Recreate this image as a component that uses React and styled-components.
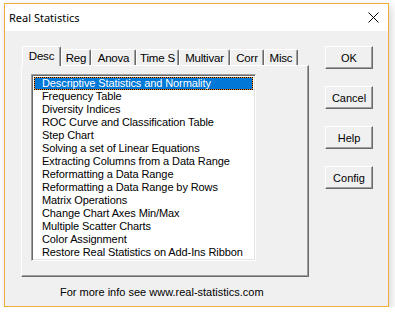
import React from 'react'
import styled, { createGlobalStyle } from 'styled-components'

const Global = createGlobalStyle`
html, body {
  margin: 0;
  padding: 0;
  background: #ffffff;
}
`

const Window = styled.div`
margin: 3px 0 0 4px;
width: 385px;
height: 304px;
box-sizing: border-box;
border: 1px solid #f0ad3e;
background: #f0f0f0;
box-shadow: 2px 3px 9px rgba(0,0,0,0.18);
display: flex;
flex-direction: column;
font-family: "Liberation Sans", Arial, sans-serif;
font-size: 11px;
color: #000;
`

const TitleBar = styled.div`
height: 27px;
background: #fff;
display: flex;
align-items: center;
justify-content: space-between;
padding: 0 9px 0 4px;
`

const Title = styled.div`
font-family: "Noto Sans", "Liberation Sans", sans-serif;
font-size: 11px;
`

const Close = styled.div`
width: 11px;
height: 11px;
display: flex;
`

const Body = styled.div`
flex: 1;
display: flex;
padding: 14px 0 0 16px;
`

const LeftCol = styled.div`
width: 288px;
display: flex;
flex-direction: column;
`

const TabRow = styled.div`
display: flex;
align-items: flex-end;
height: 20px;
padding-left: 1px;
position: relative;
z-index: 1;
`

const Tab = styled.div`
box-sizing: border-box;
width: ${p => p.w}px;
height: ${p => (p.active ? 20 : 16)}px;
border-top: 1px solid #fff;
border-left: 1px solid #fff;
border-right: 1px solid #696969;
box-shadow: inset -1px 0 0 #a0a0a0;
border-radius: 2px 2px 0 0;
background: #f0f0f0;
display: flex;
justify-content: center;
align-items: ${p => (p.active ? 'flex-start' : 'center')};
padding-top: ${p => (p.active ? '3px' : '0')};
font-size: 11.5px;
letter-spacing: -0.2px;
white-space: nowrap;
margin-bottom: ${p => (p.active ? '-1px' : '0')};
`

const Panel = styled.div`
box-sizing: border-box;
height: 212px;
border-top: 1px solid #fff;
border-left: 1px solid #fff;
border-right: 1px solid #696969;
border-bottom: 1px solid #696969;
box-shadow: inset -1px -1px 0 #a0a0a0;
padding: 8px 0 0 9px;
`

const ListBox = styled.div`
box-sizing: border-box;
width: 225px;
height: 187px;
background: #fff;
border-top: 1px solid #a0a0a0;
border-left: 1px solid #a0a0a0;
border-right: 1px solid #fff;
border-bottom: 1px solid #fff;
box-shadow: inset 1px 1px 0 #696969, inset -1px -1px 0 #e3e3e3;
padding: 2px 2px 0 2px;
`

const Item = styled.div`
box-sizing: border-box;
height: 13px;
line-height: 11px;
padding-left: 7px;
border: 1px solid transparent;
white-space: nowrap;
letter-spacing: -0.1px;
color: ${p => (p.selected ? '#fff' : '#000')};
${p => p.selected && `
  border: 1px dotted #000;
  background: linear-gradient(#0078d7, #0078d7) padding-box, linear-gradient(#f08a24, #f08a24) border-box;
`}
`

const Footer = styled.div`
padding: 9px 0 0 39px;
font-size: 11px;
`

const RightCol = styled.div`
display: flex;
flex-direction: column;
gap: 17px;
padding: 1px 0 0 16px;
`

const Button = styled.div`
box-sizing: border-box;
width: 48px;
height: 23px;
background: #f0f0f0;
border-top: 1px solid #fff;
border-left: 1px solid #fff;
border-right: 1px solid #696969;
border-bottom: 1px solid #696969;
box-shadow: inset -1px -1px 0 #a0a0a0;
display: flex;
align-items: center;
justify-content: center;
font-size: 11px;
`

const tabs = [
  ['Desc', 39],
  ['Reg', 30],
  ['Anova', 45],
  ['Time S', 43],
  ['Multivar', 51],
  ['Corr', 34],
  ['Misc', 34],
]

const items = [
  'Descriptive Statistics and Normality',
  'Frequency Table',
  'Diversity Indices',
  'ROC Curve and Classification Table',
  'Step Chart',
  'Solving a set of Linear Equations',
  'Extracting Columns from a Data Range',
  'Reformatting a Data Range',
  'Reformatting a Data Range by Rows',
  'Matrix Operations',
  'Change Chart Axes Min/Max',
  'Multiple Scatter Charts',
  'Color Assignment',
  'Restore Real Statistics on Add-Ins Ribbon',
]

const App = () => {
  return (
    <>
      <Global />
      <Window>
        <TitleBar>
          <Title>Real Statistics</Title>
          <Close>
            <svg width="11" height="11" viewBox="0 0 11 11">
              <path d="M0.5 0.5 L10.5 10.5 M10.5 0.5 L0.5 10.5" stroke="#000" strokeWidth="1" fill="none" />
            </svg>
          </Close>
        </TitleBar>
        <Body>
          <LeftCol>
            <TabRow>
              {tabs.map(([t, w], i) => (
                <Tab key={t} w={w} active={i === 0}>{t}</Tab>
              ))}
            </TabRow>
            <Panel>
              <ListBox>
                {items.map((it, i) => (
                  <Item key={it} selected={i === 0}>{it}</Item>
                ))}
              </ListBox>
            </Panel>
            <Footer>For more info see www.real-statistics.com</Footer>
          </LeftCol>
          <RightCol>
            <Button>OK</Button>
            <Button>Cancel</Button>
            <Button>Help</Button>
            <Button>Config</Button>
          </RightCol>
        </Body>
      </Window>
    </>
  )
}

export default App
